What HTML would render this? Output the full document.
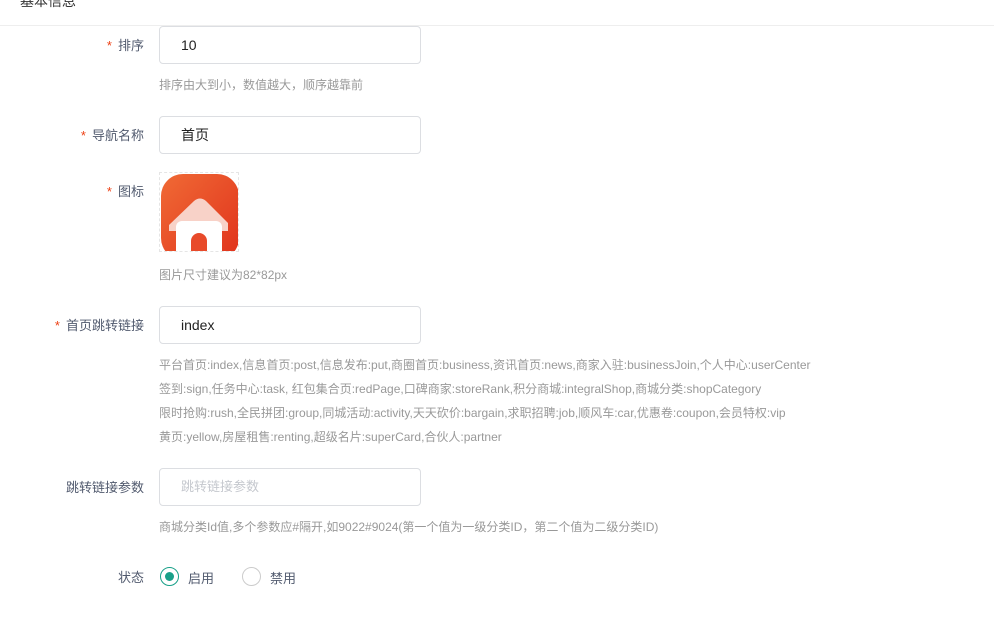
<!DOCTYPE html><html><head><meta charset="utf-8"><style>
body{margin:0;width:994px;height:623px;background:#fff;font-family:"Liberation Sans","Noto Sans CJK SC",sans-serif;position:relative;overflow:hidden}
.a{position:absolute}
.lab{position:absolute;right:850px;font-size:13px;color:#515a6e;white-space:nowrap}
.lab i{color:#ed4014;font-style:normal;margin-right:6px}
.in{position:absolute;left:159px;width:260px;height:36px;border:1px solid #dcdee2;border-radius:4px;font-size:14px;color:#222;line-height:36px;box-sizing:content-box}
.in span{margin-left:21px}
.h{position:absolute;left:159px;font-size:12px;color:#999;white-space:nowrap}
</style></head><body>
<div class="a" style="left:0;top:25px;width:994px;height:1px;background:#eee"></div>
<div class="a" style="left:20px;top:-9px;font-size:14px;color:#333">基本信息</div>

<div class="lab" style="top:35px"><i>*</i>排序</div>
<div class="in" style="top:26px"><span>10</span></div>
<div class="h" style="top:76px">排序由大到小，数值越大，顺序越靠前</div>

<div class="lab" style="top:125px"><i>*</i>导航名称</div>
<div class="in" style="top:116px"><span>首页</span></div>

<div class="lab" style="top:181px"><i>*</i>图标</div>
<div class="a" style="left:159px;top:172px;width:78px;height:78px;border:1px dashed #e5e5e5;overflow:hidden">
<svg width="80" height="80" viewBox="0 0 80 80" style="position:absolute;left:0;top:0">
<defs><linearGradient id="g" x1="0" y1="0" x2="1" y2="1"><stop offset="0" stop-color="#f06a35"/><stop offset="1" stop-color="#e0321c"/></linearGradient></defs>
<rect x="1" y="1" width="78" height="86" rx="22" fill="url(#g)"/>
<path d="M9 52 L34 28 Q40 23 46 28 L68 50 L68 58 L9 58 Z" fill="#f8d2c8"/>
<rect x="16" y="48" width="46" height="40" rx="6" fill="#fff"/>
<rect x="31" y="60" width="16" height="30" rx="8" fill="#e84a2a"/>
</svg></div>
<div class="h" style="top:266px">图片尺寸建议为82*82px</div>

<div class="lab" style="top:315px"><i>*</i>首页跳转链接</div>
<div class="in" style="top:306px"><span>index</span></div>
<div class="h" style="top:356px">平台首页:index,信息首页:post,信息发布:put,商圈首页:business,资讯首页:news,商家入驻:businessJoin,个人中心:userCenter</div>
<div class="h" style="top:380px">签到:sign,任务中心:task, 红包集合页:redPage,口碑商家:storeRank,积分商城:integralShop,商城分类:shopCategory</div>
<div class="h" style="top:404px">限时抢购:rush,全民拼团:group,同城活动:activity,天天砍价:bargain,求职招聘:job,顺风车:car,优惠卷:coupon,会员特权:vip</div>
<div class="h" style="top:428px">黄页:yellow,房屋租售:renting,超级名片:superCard,合伙人:partner</div>

<div class="lab" style="top:477px">跳转链接参数</div>
<div class="in" style="top:468px;color:#c5c8ce;font-size:13px"><span>跳转链接参数</span></div>
<div class="h" style="top:518px">商城分类Id值,多个参数应#隔开,如9022#9024(第一个值为一级分类ID，第二个值为二级分类ID)</div>

<div class="lab" style="top:567px">状态</div>
<div class="a" style="left:160px;top:567px;width:17px;height:17px;border:1px solid #19a089;border-radius:50%"></div>
<div class="a" style="left:165px;top:572px;width:9px;height:9px;background:#19a089;border-radius:50%"></div>
<div class="a" style="left:188px;top:568px;font-size:13px;color:#515a6e">启用</div>
<div class="a" style="left:242px;top:567px;width:17px;height:17px;border:1px solid #ccc;border-radius:50%"></div>
<div class="a" style="left:270px;top:568px;font-size:13px;color:#515a6e">禁用</div>
</body></html>
